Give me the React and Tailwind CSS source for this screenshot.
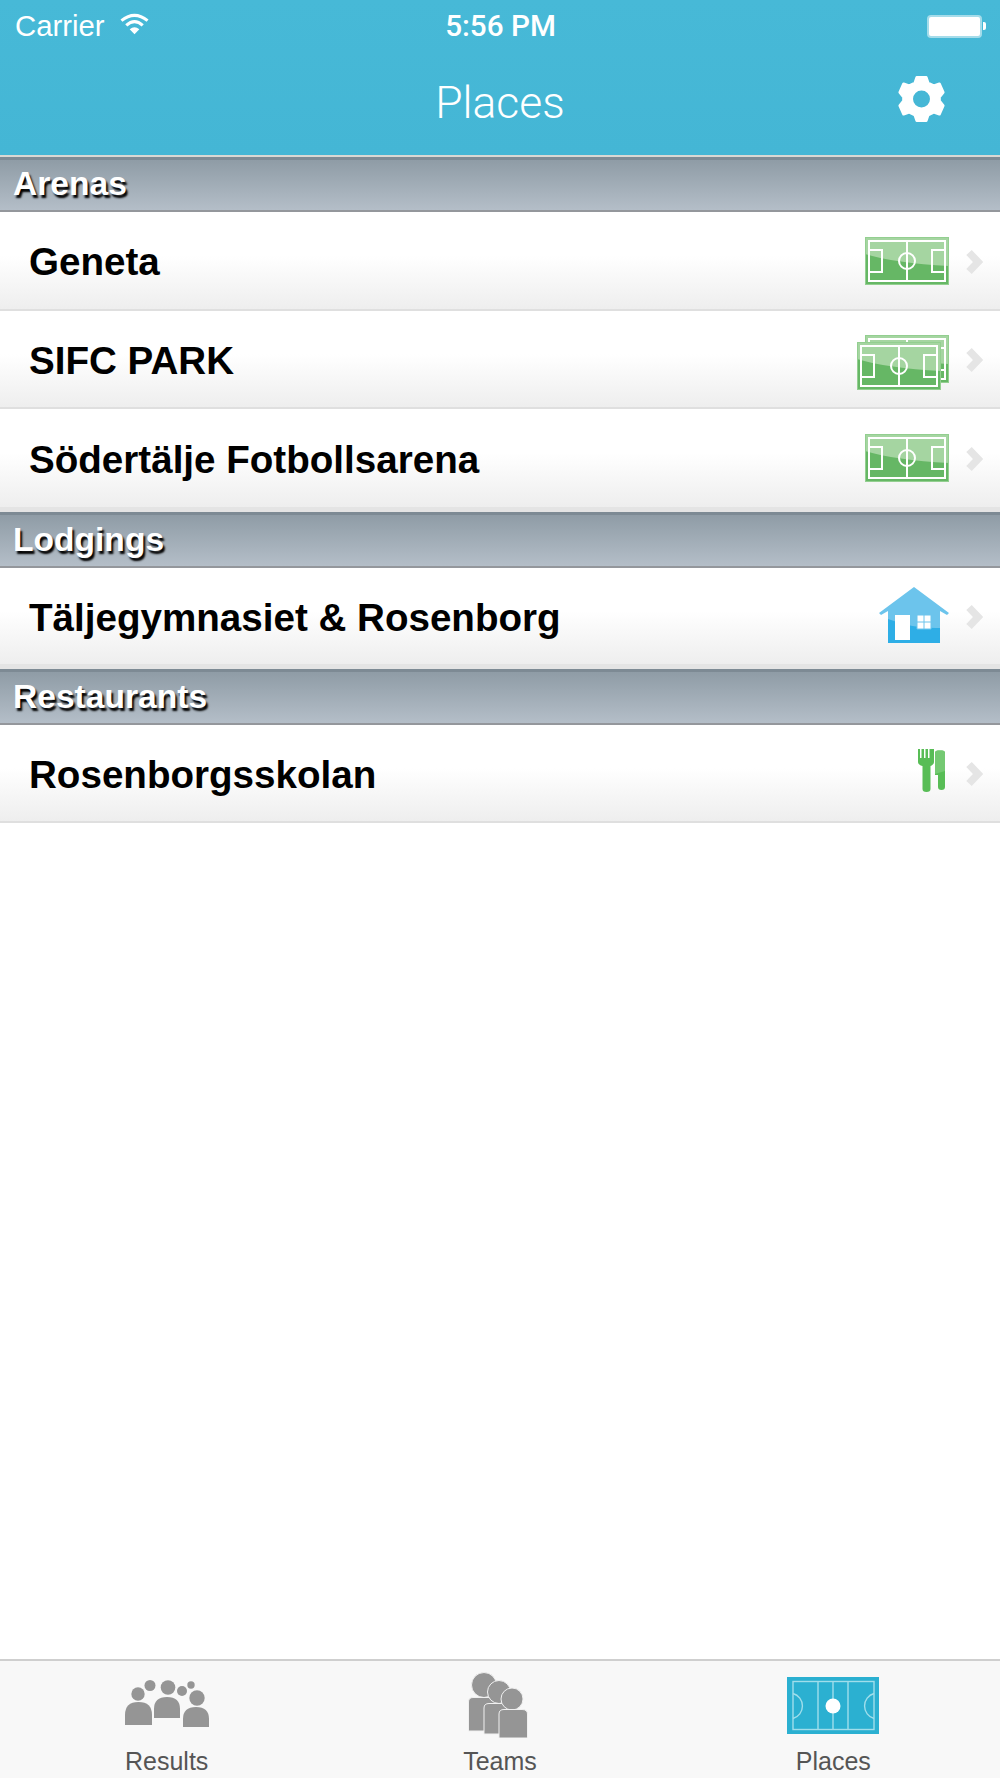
const Pitch = ({ className = "" }) => (
  <svg viewBox="0 0 84 48" className={className}>
    <rect x="0" y="0" width="84" height="48" fill="#a5d5a1" />
    <path d="M0 17 Q30 26 84 29 V48 H0 Z" fill="#66b765" />
    <rect x="0.5" y="0.5" width="83" height="47" fill="none" stroke="#93cf90" />
    <g fill="none" stroke="#ffffff" strokeWidth="2">
      <rect x="4" y="4" width="76" height="40" />
      <path d="M42 4 V44" />
      <circle cx="42" cy="24" r="8" />
      <rect x="4" y="13" width="13" height="22" />
      <rect x="67" y="13" width="13" height="22" />
    </g>
  </svg>
);

const DoublePitch = () => (
  <span className="relative block w-[92px] h-[55px] mt-[6px]">
    <Pitch className="absolute right-0 top-0 w-[84px] h-[48px]" />
    <Pitch className="absolute left-0 bottom-0 w-[84px] h-[48px]" />
  </span>
);

const House = () => (
  <svg viewBox="0 0 70 56" className="w-[70px] h-[56px] block mb-[3px]">
    <path d="M0 26 L35 0 L70 26 L68 28 L61 24 V56 H9 V24 L2 28 Z" fill="#6cc4ec" />
    <path d="M9 32 Q35 42 61 41 V56 H9 Z" fill="#2eaee6" />
    <rect x="16" y="28" width="15" height="25" fill="#fff" />
    <path d="M38 28 H52 V42 H38 Z M45 28 V42 M38 35 H52" fill="#fff" stroke="#6cc4ec" strokeWidth="1" />
  </svg>
);

const Cutlery = () => (
  <svg viewBox="0 0 28 43" className="w-[28px] h-[43px] block mb-[5px]">
    <path d="M0 0 H2 V9 H3.5 V0 H6 V9 H7.5 V0 H10 V9 H11.5 V0 H16 V13 C16 15 14 16.5 12.5 17 V40 Q12.5 43 8.5 43 Q4.5 43 4.5 40 V17 C2 16.5 0 15 0 13 Z" fill="#58bd56" />
    <path d="M17 4 Q17 1.5 20 1.5 H24 Q27 1.5 27 4 V38 Q27 41 23.5 41 Q20 41 20 38 V26 H17 Z" fill="#58bd56" />
    <path d="M17 4 Q17 1.5 20 1.5 H24 Q27 1.5 27 4 V22 L17 25 Z" fill="#74c972" />
  </svg>
);

const Chevron = () => (
  <svg viewBox="0 0 18 26" className="w-[18px] h-[26px] shrink-0 block mt-[2px]">
    <path d="M4 3.5 L13 13 L4 22.5" fill="none" stroke="#e5e5e5" strokeWidth="7.5" />
  </svg>
);

const Row = ({ name, icon, iconClass, h }) => (
  <div className={`${h} flex items-center pl-[29px] pr-[17px] bg-gradient-to-b from-white from-45% to-[#eeeeee]`}>
    <span className="flex-1 text-[38.6px] font-bold text-black mt-[3px]">{name}</span>
    <span className={iconClass}>{icon}</span>
    <Chevron />
  </div>
);

const Header = ({ title, h }) => (
  <div className={`${h} flex items-center pl-[13px] bg-gradient-to-b from-[#8f9ca6] to-[#b4bec8] border-t-[3px] border-t-[#7d8a94] border-b-2 border-b-[#94979c]`}>
    <span className="text-[33.6px] font-bold text-white [text-shadow:2px_3px_2px_#000] -mt-[1px]">{title}</span>
  </div>
);

const Band = () => <div className="h-[5px] bg-[#e4e4e4]" />;

const Results = () => (
  <svg viewBox="0 0 84 50" className="w-[84px] h-[50px] block" fill="#959595">
    <circle cx="13" cy="14" r="6.7" />
    <circle cx="25" cy="5.5" r="5.5" />
    <circle cx="43" cy="7.5" r="7.3" />
    <circle cx="57" cy="11" r="5" />
    <circle cx="66" cy="5" r="3.7" />
    <circle cx="72" cy="18" r="7.7" />
    <path d="M0 45 V35 Q0 22 13.5 22 Q27 22 27 35 V45 Z" />
    <path d="M29 38 V29 Q29 17 42 17 Q55 17 55 29 V38 Z" />
    <path d="M58 47 V39 Q58 27 71 27 Q84 27 84 39 V47 Z" />
  </svg>
);

const Teams = () => (
  <svg viewBox="0 0 60 66" className="w-[60px] h-[66px] block" fill="#959595" stroke="#f0f0f0" strokeWidth="1">
    <circle cx="16" cy="13" r="12.5" />
    <path d="M0.5 59 V30 Q0.5 25.5 5 25.5 H26 Q30 25.5 30 30 V59 Z" />
    <circle cx="31" cy="20" r="11.5" />
    <path d="M16 62 V36 Q16 31.5 21 31.5 H40 Q45 31.5 45 36 V62 Z" />
    <circle cx="44" cy="27" r="11" />
    <path d="M31 66 V42 Q31 37.5 36 37.5 H54 Q59.5 37.5 59.5 42 V66 Z" />
  </svg>
);

const Court = () => (
  <svg viewBox="0 0 92 57" className="w-[92px] h-[57px] block">
    <rect width="92" height="57" fill="#2bb0d1" />
    <g fill="none" stroke="#a0deeb" strokeWidth="1.4">
      <rect x="6" y="4.5" width="81" height="48" />
      <path d="M31 4.5 V52.5 M46 4.5 V52.5 M61 4.5 V52.5" />
      <path d="M6 16.5 A13 13 0 0 1 6 41.5 M87 16.5 A13 13 0 0 0 87 41.5" />
    </g>
    <circle cx="46" cy="29" r="7.5" fill="#fff" />
  </svg>
);

export default function App() {
  return (
    <div className="h-[1778px] w-[1000px] flex flex-col bg-white font-['Liberation_Sans',sans-serif] overflow-hidden">
      <div className="h-[155px] bg-gradient-to-b from-[#47b9d7] to-[#44b6d5] text-white flex flex-col">
        <div className="h-[52px] flex items-center justify-between pl-[15px] pr-[14px]">
          <div className="flex items-center gap-[15px] w-[300px]">
            <span className="text-[29.3px]">Carrier</span>
            <svg viewBox="0 0 30 22" className="w-[29px] h-[22px] -mt-[4px]">
              <path d="M1.5 7.5 Q15 -3.5 28.5 7.5" fill="none" stroke="#fff" strokeWidth="3.2" />
              <path d="M6.5 12.5 Q15 4.5 23.5 12.5" fill="none" stroke="#fff" strokeWidth="3.2" />
              <path d="M10 16.5 Q15 12 20 16.5 L15 21.5 Z" fill="#fff" />
            </svg>
          </div>
          <span className="text-[29.7px] font-medium font-['Roboto',sans-serif]">5:56 PM</span>
          <div className="w-[300px] flex justify-end items-center">
            <div className="w-[55px] h-[23px] rounded-[4px] bg-white border-2 border-[#a5dcea]" />
            <div className="w-[3px] h-[8px] bg-white rounded-r-[2px] ml-[1px]" />
          </div>
        </div>
        <div className="h-[103px] relative flex items-center justify-center">
          <span className="text-[44.4px] font-light font-['Roboto',sans-serif]">Places</span>
          <svg viewBox="0 0 52 52" className="absolute right-[54px] top-[21px] w-[49px] h-[52px]">
            <path
              fill="#fff"
              fillRule="evenodd"
              d="M21 3 H31 L33 9 L39 12 L45 10 L49 19 L45 24 V28 L49 33 L45 42 L39 40 L33 43 L31 49 H21 L19 43 L13 40 L7 42 L3 33 L7 28 V24 L3 19 L7 10 L13 12 L19 9 Z M26 15.5 A10.5 10.5 0 1 0 26 36.5 A10.5 10.5 0 1 0 26 15.5 Z"
              stroke="#fff"
              strokeWidth="3"
              strokeLinejoin="round"
            />
          </svg>
        </div>
      </div>
      <div className="h-[2px] bg-[#d8d8d4]" />
      <Header title="Arenas" h="h-[55px]" />
      <Row name="Geneta" h="h-[99px] border-b-2 border-[#dfdfdf]" icon={<Pitch className="w-[84px] h-[48px] block" />} iconClass="mr-[16px]" />
      <Row name="SIFC PARK" h="h-[98px] border-b-2 border-[#dfdfdf]" icon={<DoublePitch />} iconClass="mr-[16px]" />
      <Row name="Södertälje Fotbollsarena" h="h-[98px]" icon={<Pitch className="w-[84px] h-[48px] block" />} iconClass="mr-[16px]" />
      <Band />
      <Header title="Lodgings" h="h-[56px]" />
      <Row name="Täljegymnasiet & Rosenborg" h="h-[96px]" icon={<House />} iconClass="mr-[16px]" />
      <Band />
      <Header title="Restaurants" h="h-[56px]" />
      <Row name="Rosenborgsskolan" h="h-[98px] border-b-2 border-[#dfdfdf]" icon={<Cutlery />} iconClass="mr-[19px]" />
      <div className="flex-1" />
      <div className="h-[119px] bg-[#f8f8f8] border-t-2 border-[#cfcfcf] grid grid-cols-3">
        <div className="flex flex-col items-center">
          <div className="h-[84px] pt-[19px]"><Results /></div>
          <span className="text-[25px] leading-[32px] text-[#555]">Results</span>
        </div>
        <div className="flex flex-col items-center">
          <div className="h-[84px] pt-[11px] mr-[4px]"><Teams /></div>
          <span className="text-[25px] leading-[32px] text-[#555]">Teams</span>
        </div>
        <div className="flex flex-col items-center">
          <div className="h-[84px] pt-[16px]"><Court /></div>
          <span className="text-[25px] leading-[32px] text-[#555]">Places</span>
        </div>
      </div>
    </div>
  );
}
